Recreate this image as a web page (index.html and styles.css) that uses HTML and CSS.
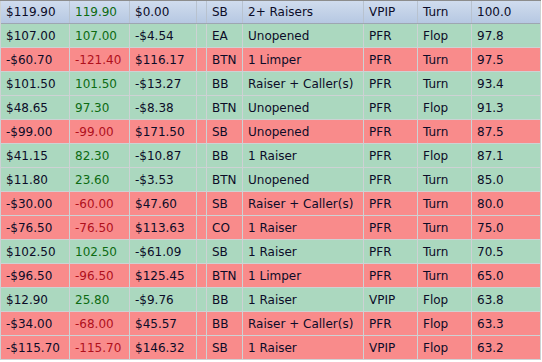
FILE: index.html
```html
<!DOCTYPE html>
<html>
<head>
<meta charset="utf-8">
<link rel="stylesheet" href="styles.css">
</head>
<body>
<div class="grid">
  <div class="row head"><div class="c">$119.90</div><div class="c amt">119.90</div><div class="c">$0.00</div><div class="c"></div><div class="c">SB</div><div class="c">2+ Raisers</div><div class="c">VPIP</div><div class="c">Turn</div><div class="c">100.0</div></div>
  <div class="row win"><div class="c">$107.00</div><div class="c amt">107.00</div><div class="c">-$4.54</div><div class="c"></div><div class="c">EA</div><div class="c">Unopened</div><div class="c">PFR</div><div class="c">Flop</div><div class="c">97.8</div></div>
  <div class="row loss"><div class="c">-$60.70</div><div class="c amt">-121.40</div><div class="c">$116.17</div><div class="c"></div><div class="c">BTN</div><div class="c">1 Limper</div><div class="c">PFR</div><div class="c">Turn</div><div class="c">97.5</div></div>
  <div class="row win"><div class="c">$101.50</div><div class="c amt">101.50</div><div class="c">-$13.27</div><div class="c"></div><div class="c">BB</div><div class="c">Raiser + Caller(s)</div><div class="c">PFR</div><div class="c">Turn</div><div class="c">93.4</div></div>
  <div class="row win"><div class="c">$48.65</div><div class="c amt">97.30</div><div class="c">-$8.38</div><div class="c"></div><div class="c">BTN</div><div class="c">Unopened</div><div class="c">PFR</div><div class="c">Flop</div><div class="c">91.3</div></div>
  <div class="row loss"><div class="c">-$99.00</div><div class="c amt">-99.00</div><div class="c">$171.50</div><div class="c"></div><div class="c">SB</div><div class="c">Unopened</div><div class="c">PFR</div><div class="c">Turn</div><div class="c">87.5</div></div>
  <div class="row win"><div class="c">$41.15</div><div class="c amt">82.30</div><div class="c">-$10.87</div><div class="c"></div><div class="c">BB</div><div class="c">1 Raiser</div><div class="c">PFR</div><div class="c">Flop</div><div class="c">87.1</div></div>
  <div class="row win"><div class="c">$11.80</div><div class="c amt">23.60</div><div class="c">-$3.53</div><div class="c"></div><div class="c">BTN</div><div class="c">Unopened</div><div class="c">PFR</div><div class="c">Turn</div><div class="c">85.0</div></div>
  <div class="row loss"><div class="c">-$30.00</div><div class="c amt">-60.00</div><div class="c">$47.60</div><div class="c"></div><div class="c">SB</div><div class="c">Raiser + Caller(s)</div><div class="c">PFR</div><div class="c">Turn</div><div class="c">80.0</div></div>
  <div class="row loss"><div class="c">-$76.50</div><div class="c amt">-76.50</div><div class="c">$113.63</div><div class="c"></div><div class="c">CO</div><div class="c">1 Raiser</div><div class="c">PFR</div><div class="c">Turn</div><div class="c">75.0</div></div>
  <div class="row win"><div class="c">$102.50</div><div class="c amt">102.50</div><div class="c">-$61.09</div><div class="c"></div><div class="c">SB</div><div class="c">1 Raiser</div><div class="c">PFR</div><div class="c">Turn</div><div class="c">70.5</div></div>
  <div class="row loss"><div class="c">-$96.50</div><div class="c amt">-96.50</div><div class="c">$125.45</div><div class="c"></div><div class="c">BTN</div><div class="c">1 Limper</div><div class="c">PFR</div><div class="c">Turn</div><div class="c">65.0</div></div>
  <div class="row win"><div class="c">$12.90</div><div class="c amt">25.80</div><div class="c">-$9.76</div><div class="c"></div><div class="c">BB</div><div class="c">1 Raiser</div><div class="c">VPIP</div><div class="c">Flop</div><div class="c">63.8</div></div>
  <div class="row loss"><div class="c">-$34.00</div><div class="c amt">-68.00</div><div class="c">$45.57</div><div class="c"></div><div class="c">BB</div><div class="c">Raiser + Caller(s)</div><div class="c">PFR</div><div class="c">Flop</div><div class="c">63.3</div></div>
  <div class="row loss"><div class="c">-$115.70</div><div class="c amt">-115.70</div><div class="c">$146.32</div><div class="c"></div><div class="c">SB</div><div class="c">1 Raiser</div><div class="c">VPIP</div><div class="c">Flop</div><div class="c">63.2</div></div>
</div>
</body>
</html>
```
FILE: styles.css
```css
html, body {
  margin: 0;
  padding: 0;
  background: #ffffff;
}

.grid {
  width: 539px;
  display: flex;
  flex-direction: column;
  gap: 1px;
  padding: 0 1px 1px 1px;
  border-top: 1px solid #8c8c8c;
  background: #cdd2d4;
  font-family: "DejaVu Sans", Verdana, sans-serif;
  font-size: 12px;
  color: #0c0c28;
}

.row {
  display: grid;
  grid-template-columns: 68px 59px 66px 9px 35px 120px 53px 53px 68px;
  column-gap: 1px;
  height: 23px;
}

.row.head {
  height: 22px;
  border-bottom: 1px solid #9ea6b2;
  margin-bottom: -1px;
  background: #b8c2cf;
}

.c {
  display: flex;
  align-items: center;
  padding-left: 5px;
  white-space: nowrap;
  overflow: hidden;
}

.head .c {
  background: linear-gradient(#d0dcee, #b6c8e2);
}

.win .c {
  background: #abd8bf;
}

.loss .c {
  background: #f98b8b;
}

.head .amt,
.win .amt {
  color: #0d6b12;
}

.loss .amt {
  color: #b0101c;
}
```
